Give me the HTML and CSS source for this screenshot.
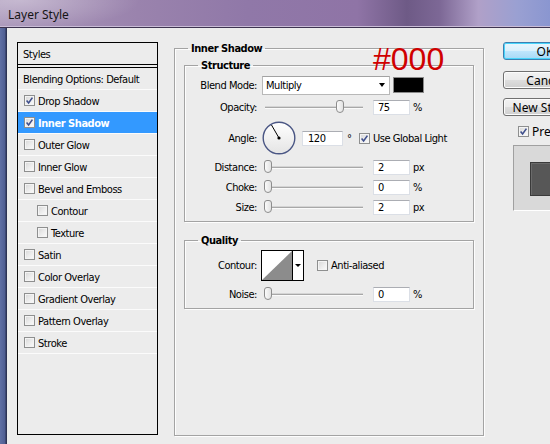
FILE: index.html
```html
<!DOCTYPE html>
<html>
<head>
<meta charset="utf-8">
<title>Layer Style</title>
<link rel="stylesheet" href="styles.css">
</head>
<body>
<div class="window">
  <div class="titlebar"><span class="title">Layer Style</span></div>
  <div class="frame">
    <div class="client">
      <div class="styles-panel">
        <div class="sp-head">Styles</div>
        <div class="sp-row">Blending Options: Default</div>
        <div class="sp-row"><span class="cb checked"><svg viewBox="0 0 9 9"><path d="M1.6 4.6 L3.6 7 L7.4 1.6"/></svg></span>Drop Shadow</div>
        <div class="sp-row selected"><span class="cb checked"><svg viewBox="0 0 9 9"><path d="M1.6 4.6 L3.6 7 L7.4 1.6"/></svg></span>Inner Shadow</div>
        <div class="sp-row"><span class="cb"></span>Outer Glow</div>
        <div class="sp-row"><span class="cb"></span>Inner Glow</div>
        <div class="sp-row"><span class="cb"></span>Bevel and Emboss</div>
        <div class="sp-row sub"><span class="cb"></span>Contour</div>
        <div class="sp-row sub"><span class="cb"></span>Texture</div>
        <div class="sp-row"><span class="cb"></span>Satin</div>
        <div class="sp-row"><span class="cb"></span>Color Overlay</div>
        <div class="sp-row"><span class="cb"></span>Gradient Overlay</div>
        <div class="sp-row"><span class="cb"></span>Pattern Overlay</div>
        <div class="sp-row"><span class="cb"></span>Stroke</div>
      </div>

      <fieldset class="group main">
        <legend>Inner Shadow</legend>
        <fieldset class="group sub-group structure">
          <legend>Structure</legend>
          <div class="row r-blend">
            <span class="lbl">Blend Mode:</span>
            <div class="select"><span>Multiply</span><span class="arrow"></span></div>
            <div class="swatch"></div>
          </div>
          <div class="row r-opacity">
            <span class="lbl">Opacity:</span>
            <div class="slider"><span class="thumb" style="left: 72px"></span></div>
            <div class="input">75</div>
            <span class="unit">%</span>
          </div>
          <div class="row r-angle">
            <span class="lbl">Angle:</span>
            <div class="dial">
              <svg viewBox="0 0 34 34" width="34" height="34">
                <defs>
                  <linearGradient id="dg" x1="0" y1="0" x2="0" y2="1">
                    <stop offset="0" stop-color="#ffffff"/>
                    <stop offset="1" stop-color="#e4e4e4"/>
                  </linearGradient>
                </defs>
                <circle cx="17" cy="17" r="15.8" fill="url(#dg)" stroke="#4a5684" stroke-width="1.4"/>
                <line x1="17" y1="17" x2="9.5" y2="4" stroke="#000" stroke-width="1"/>
                <circle cx="17" cy="17" r="1.6" fill="#000"/>
              </svg>
            </div>
            <div class="input wide">120</div>
            <span class="deg">°</span>
            <span class="cb checked gl"><svg viewBox="0 0 9 9"><path d="M1.6 4.6 L3.6 7 L7.4 1.6"/></svg></span>
            <span class="cbl">Use Global Light</span>
          </div>
          <div class="row r-small">
            <span class="lbl">Distance:</span>
            <div class="slider"><span class="thumb" style="left: 0px"></span></div>
            <div class="input">2</div>
            <span class="unit">px</span>
          </div>
          <div class="row r-small">
            <span class="lbl">Choke:</span>
            <div class="slider"><span class="thumb" style="left: 0px"></span></div>
            <div class="input">0</div>
            <span class="unit">%</span>
          </div>
          <div class="row r-small">
            <span class="lbl">Size:</span>
            <div class="slider"><span class="thumb" style="left: 0px"></span></div>
            <div class="input">2</div>
            <span class="unit">px</span>
          </div>
        </fieldset>

        <fieldset class="group sub-group quality">
          <legend>Quality</legend>
          <div class="row r-contour">
            <span class="lbl">Contour:</span>
            <div class="contour">
              <svg class="curve" viewBox="0 0 30 29" width="30" height="29">
                <rect x="0" y="0" width="30" height="29" fill="#fff"/>
                <polygon points="0,29 30,0 30,29" fill="#8c8c8c"/>
              </svg>
              <div class="cdrop"><span class="arrow"></span></div>
            </div>
            <span class="cb aa"></span>
            <span class="cbl">Anti-aliased</span>
          </div>
          <div class="row r-small r-noise">
            <span class="lbl">Noise:</span>
            <div class="slider"><span class="thumb" style="left: 0px"></span></div>
            <div class="input">0</div>
            <span class="unit">%</span>
          </div>
        </fieldset>
      </fieldset>

      <div class="side">
        <div class="btn default">OK</div>
        <div class="btn cancel">Cancel</div>
        <div class="btn newstyle">New Style...</div>
        <div class="preview-row"><span class="cb checked"><svg viewBox="0 0 9 9"><path d="M1.6 4.6 L3.6 7 L7.4 1.6"/></svg></span><span class="cbl">Preview</span></div>
        <div class="preview-box"><div class="preview-swatch"></div></div>
      </div>
    </div>
  </div>
  <div class="annot">#000</div>
</div>
</body>
</html>
```
FILE: styles.css
```css
html, body {
  margin: 0;
  padding: 0;
}
body {
  width: 550px;
  height: 444px;
  overflow: hidden;
  background: #ececec;
  font-family: "DejaVu Sans Condensed", "DejaVu Sans", sans-serif;
  font-stretch: condensed;
  font-size: 11px;
  letter-spacing: -0.45px;
  color: #000;
}
.window {
  position: relative;
  width: 550px;
  height: 444px;
  display: flex;
  flex-direction: column;
}
.titlebar {
  height: 28px;
  flex: none;
  box-sizing: border-box;
  border-bottom: 1px solid #3e3450;
  box-shadow: inset 0 -1px 0 #c9bcd6;
  background:
    radial-gradient(ellipse 120px 30px at 20px 0px, rgba(255,255,255,0.35), rgba(255,255,255,0) 100%),
    linear-gradient(to right, #a996b9 0%, #9a83ad 25%, #9078a8 45%, #8f74a6 65%, #6e5a86 74%, #7d6896 80%, #b0a0c8 87%, #9aa0d2 94%, #8a96d0 100%);
  display: flex;
  align-items: center;
  padding-left: 8px;
}
.title {
  font-family: "Noto Sans", "Open Sans", sans-serif;
  font-stretch: normal;
  letter-spacing: 0;
  font-size: 12px;
  color: #151515;
  margin-top: 2px;
}
.frame {
  flex: 1;
  display: flex;
  padding-left: 7px;
  background: linear-gradient(to right, #6070a4 0px, #4f5e92 5px, #2c3354 6px, #2c3354 7px);
}
.client {
  flex: 1;
  display: flex;
  align-items: flex-start;
  background: #ececec;
  padding: 13px 0 0 10px;
}

/* styles list */
.styles-panel {
  flex: none;
  margin-top: 1px;
  width: 141px;
  height: 393px;
  box-sizing: border-box;
  border: 1px solid #000;
  background: #ececec;
}
.sp-head {
  height: 20px;
  padding-top: 1px;
  border-bottom: 4px double #000;
  display: flex;
  align-items: center;
  padding-left: 5px;
}
.sp-row {
  height: 20px;
  padding-top: 1px;
  border-bottom: 1px solid #fbfbfb;
  display: flex;
  align-items: center;
  padding-left: 5px;
}
.sp-row .cb {
  margin-left: 1px;
  margin-right: 3px;
  margin-top: -1px;
}
.sp-row.sub {
  padding-left: 18px;
}
.sp-row.selected {
  background: #3399ff;
  color: #fff;
  font-weight: bold;
}

/* checkbox */
.cb {
  display: inline-block;
  flex: none;
  width: 11px;
  height: 11px;
  box-sizing: border-box;
  border: 1px solid #8e8f8f;
  background: linear-gradient(135deg, #d6d6d6 0%, #ebebeb 50%, #fcfcfc 100%);
  box-shadow: inset 0 0 0 1px #f4f4f4;
  position: relative;
}
.cb svg {
  display: block;
  width: 9px;
  height: 9px;
}
.cb svg path {
  fill: none;
  stroke: #3f4f8c;
  stroke-width: 1.6;
}
.cbl {
  margin-left: 3px;
  white-space: nowrap;
}

/* group boxes */
.group {
  margin: 0;
  box-sizing: border-box;
  border: 1px solid #a3a3a3;
  box-shadow: inset 1px 1px 0 #fdfdfd, 1px 1px 0 #fdfdfd;
  min-width: 0;
}
.group > legend {
  font-weight: bold;
  line-height: 13px;
  padding: 0 3px;
}
.main {
  flex: none;
  margin-left: 16px;
  margin-top: 1px;
  width: 310px;
  height: 394px;
  padding: 4px 9px 0 9px;
}
.main > legend {
  margin-left: 4px;
}
.sub-group {
  width: 290px;
  padding: 3px 0 6px 0;
}
.sub-group > legend {
  margin-left: 13px;
}
.quality {
  margin-top: 12px;
}

.row {
  display: flex;
  align-items: center;
  white-space: nowrap;
}
.lbl {
  width: 72px;
  text-align: right;
  flex: none;
}
.r-blend { height: 20px; }
.r-opacity { height: 18px; margin-top: 3px; }
.r-angle { height: 34px; margin-top: 5px; }
.r-small { height: 16px; margin-top: 4px; }
.r-contour { height: 31px; }
.r-noise { margin-top: 5px; }

.select {
  margin-left: 5px;
  width: 128px;
  height: 19px;
  box-sizing: border-box;
  border: 1px solid #b8b8b8;
  border-top-color: #a2a2a2;
  background: #fff;
  display: flex;
  align-items: center;
  justify-content: space-between;
  padding: 0 4px 0 3px;
}
.arrow {
  width: 0;
  height: 0;
  border-left: 3.5px solid transparent;
  border-right: 3.5px solid transparent;
  border-top: 4px solid #000;
}
.swatch {
  margin-left: 3px;
  width: 31px;
  height: 16px;
  box-sizing: border-box;
  border: 1px solid #8a8a8a;
  background: #000;
  box-shadow: inset 0 0 0 1px #000;
}

.slider {
  position: relative;
  flex: none;
  margin-left: 7px;
  width: 100px;
  height: 14px;
}
.slider::before {
  content: "";
  position: absolute;
  left: 1px;
  right: 1px;
  top: 7px;
  height: 1px;
  background: #a8a8a8;
  box-shadow: 0 1px 0 #fafafa, 0 -1px 0 #d4d4d4;
}
.thumb {
  position: absolute;
  top: 0;
  width: 8px;
  height: 13px;
  box-sizing: border-box;
  border: 1px solid #8d8d8d;
  border-radius: 3px 3px 4px 4px;
  background: linear-gradient(to right, #fbfbfb, #e2e2e2);
}

.input {
  flex: none;
  margin-left: 9px;
  width: 37px;
  height: 15px;
  box-sizing: border-box;
  border: 1px solid #dbdfe6;
  border-top-color: #abadb3;
  background: #fff;
  padding-left: 4px;
  line-height: 13px;
}
.input.wide {
  margin-left: 6px;
  width: 41px;
  padding-left: 5px;
}
.unit {
  margin-left: 3px;
}
.dial {
  margin-left: 5px;
  width: 34px;
  height: 34px;
  flex: none;
}
.dial svg { display: block; }
.deg {
  margin-left: 4px;
  width: 4px;
}
.cb.gl {
  margin-left: 8px;
}

.contour {
  margin-left: 4px;
  flex: none;
  display: flex;
  width: 43px;
  height: 31px;
  box-sizing: border-box;
  border: 1px solid #000;
  background: #fff;
}
.contour .curve {
  display: block;
  width: 30px;
  height: 29px;
}
.cdrop {
  flex: 1;
  border-left: 1px solid #000;
  display: flex;
  align-items: center;
  justify-content: center;
}
.cdrop .arrow {
  border-left-width: 3px;
  border-right-width: 3px;
  border-top-width: 3px;
}
.cb.aa {
  margin-left: 13px;
}

/* right column */
.side {
  flex: none;
  margin-left: 19px;
  margin-top: 1px;
  display: flex;
  flex-direction: column;
}
.btn {
  width: 84px;
  height: 18px;
  box-sizing: border-box;
  border: 1px solid #707070;
  border-radius: 3px;
  background: linear-gradient(to bottom, #f2f2f2 0%, #ebebeb 48%, #dddddd 52%, #cfcfcf 100%);
  box-shadow: inset 0 0 0 1px #fcfcfc;
  display: flex;
  align-items: center;
  justify-content: center;
  font-stretch: normal;
  letter-spacing: 0;
  font-size: 12px;
  font-family: "Noto Sans", "Open Sans", sans-serif;
}
.btn.default {
  border-color: #3c7fb1;
  background: linear-gradient(to bottom, #eaf6fd 0%, #d9f0fc 48%, #bee6fd 52%, #a7d9f5 100%);
  box-shadow: inset 0 0 0 1px #48d5fb;
}
.btn.cancel { margin-top: 11px; }
.btn.newstyle { margin-top: 9px; }
.preview-row {
  margin-top: 9px;
  height: 12px;
  display: flex;
  align-items: center;
  padding-left: 15px;
  font-family: "Noto Sans", "Open Sans", sans-serif;
  font-stretch: normal;
  letter-spacing: 0;
  font-size: 12px;
}
.preview-box {
  margin-top: 8px;
  margin-left: 10px;
  width: 66px;
  height: 66px;
  box-sizing: border-box;
  border: 1px solid #a0a0a0;
  border-right-color: #fff;
  border-bottom-color: #fff;
  background: #d9d9d9;
  padding: 16px;
}
.preview-swatch {
  width: 34px;
  height: 34px;
  box-sizing: border-box;
  border: 1px solid #3a3a3a;
  background: #575757;
  box-shadow: inset 1px 1px 0 #6a6a6a;
}

.annot {
  position: absolute;
  left: 373px;
  top: 43px;
  font-family: "Liberation Sans", Arial, sans-serif;
  font-stretch: normal;
  letter-spacing: 0;
  font-size: 32px;
  line-height: 1;
  color: #d00000;
}
```
